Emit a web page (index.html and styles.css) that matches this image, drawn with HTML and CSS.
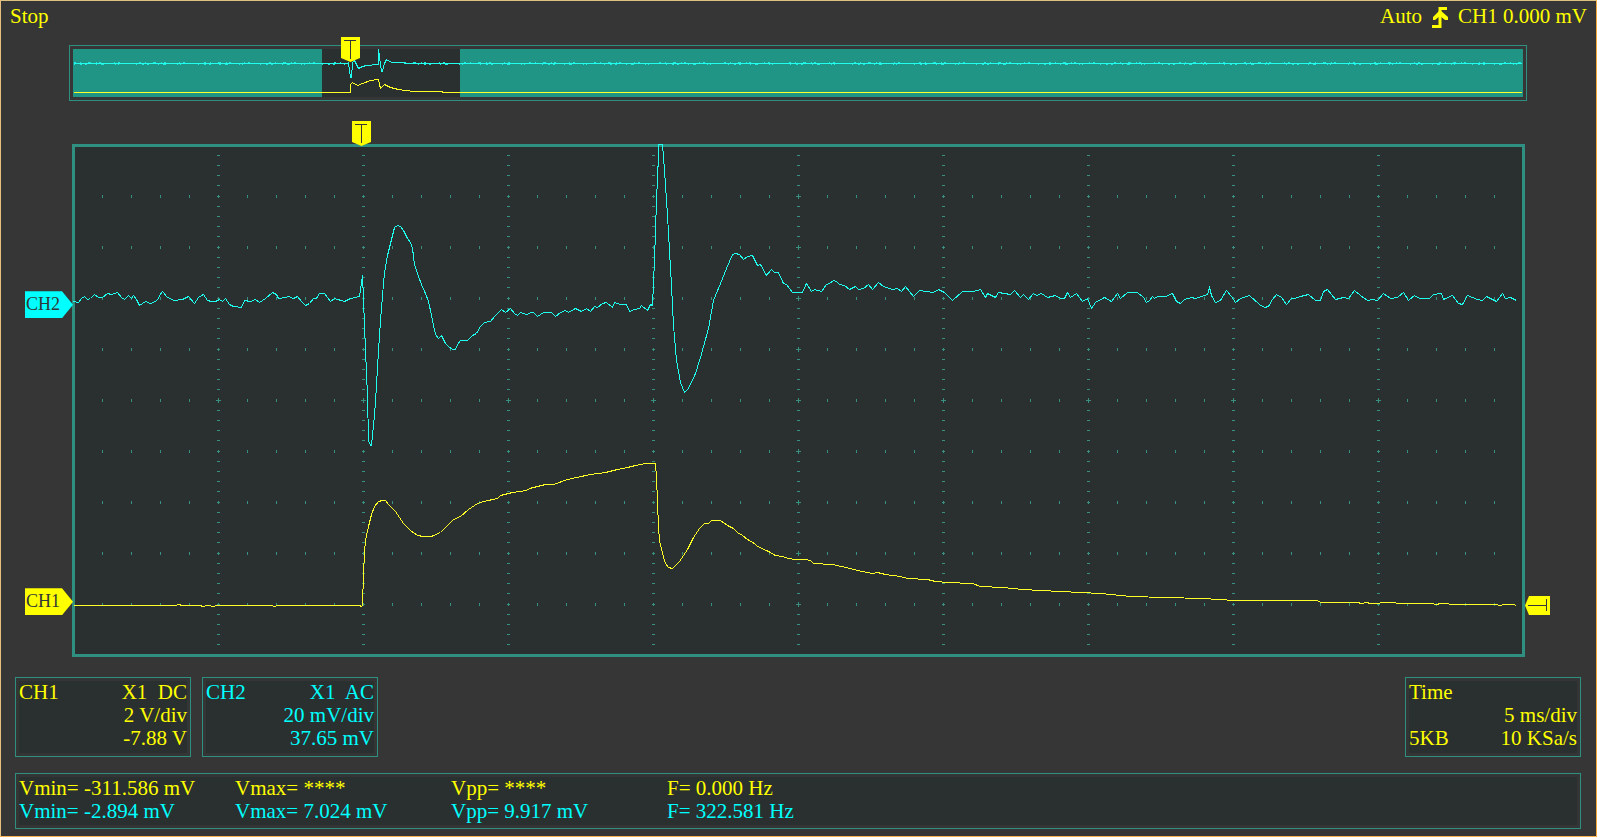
FILE: index.html
```html
<!DOCTYPE html>
<html lang="en">
<head>
<meta charset="utf-8">
<title>Oscilloscope</title>
<link rel="stylesheet" href="styles.css">
</head>
<body>
<main class="scope">
  <header class="status">
    <span>Stop</span>
    <div class="trigger">
      <span>Auto</span>
      <svg class="edge-icon" viewBox="0 0 18 21" aria-label="Rising edge"><path d="M1 19.500H9V1.500H16" fill="none" stroke="currentColor" stroke-width="3"/><path d="M9 3L2 10V13H4L9 9L14 13H17V10Z" fill="currentColor"/></svg>
      <span>CH1 0.000 mV</span>
    </div>
  </header>

  <section class="overview" aria-label="Record overview">
    <svg class="overview-graph" viewBox="73 49 1450 48" preserveAspectRatio="none">
      <rect class="record" x="73" y="49" width="1450" height="48"/>
      <rect class="window" x="322" y="49" width="138" height="48"/>
      <g class="traces" transform="translate(.5 .5)">
        <path class="noise noise-high" d="M73 62H348M398 62H1521"/>
        <path class="noise noise-low" d="M73 64H348M417 64H1521"/>
        <path class="ch2-trace" d="M73 63H348L350 77L351 77L352 62L354 60L358 68L362 66L366 65L378 64V49L381 71L382 71L384 63L386 59L391 62H401L407 63H1521"/>
        <path class="ch1-trace" d="M73 92H350V84L352 82L357 85L362 83L370 80L378 79L379 84L380 88L384 84L390 87L398 89L413 91H441L443 92H1521"/>
      </g>
    </svg>
    <svg class="marker overview-marker" viewBox="0 0 19 25"><path d="M0 0H19V21L9.500 25L0 21Z" fill="#ff0"/><path d="M3 3.500H15M9.500 3V22" stroke="#363636" fill="none"/></svg>
  </section>

  <section class="display" aria-label="Waveform display">
    <svg class="display-graph" viewBox="72 144 1453 513" preserveAspectRatio="none">
      <defs>
        <pattern id="graticule" patternUnits="userSpaceOnUse" x="198" y="176" width="145" height="51">
          <path d="M19 9.500H22M19 20.500H22M19 30.500H22M19 40.500H22M19 50.500H22M20.500 19V22M49.500 19V22M78.500 19V22M107.500 19V22M136.500 19V22"/>
        </pattern>
      </defs>
      <rect class="screen" x="73.500" y="145.500" width="1450" height="510"/>
      <rect fill="url(#graticule)" x="80" y="150" width="1438" height="502"/>
      <path class="crosses" d="M216 400.500H221M218.500 398V403M361 400.500H366M363.500 398V403M506 400.500H511M508.500 398V403M651 400.500H656M653.500 398V403M941 400.500H946M943.500 398V403M1086 400.500H1091M1088.500 398V403M1231 400.500H1236M1233.500 398V403M1376 400.500H1381M1378.500 398V403M796 196.500H801M798.500 194V199M796 247.500H801M798.500 245V250M796 298.500H801M798.500 296V301M796 349.500H801M798.500 347V352M796 400.500H801M798.500 398V403M796 451.500H801M798.500 449V454M796 502.500H801M798.500 500V505M796 553.500H801M798.500 551V556M796 604.500H801M798.500 602V607"/>
      <g class="traces" transform="translate(.5 .5)">
        <polyline class="ch2-trace" points="73,301 78,302 81,298 84,296 87,299 90,298 94,294 98,297 102,297 107,293 111,294 117,292 121,297 124,299 128,295 131,298 133,295 136,299 139,305 145,301 150,303 157,300 159,295 162,291 167,297 174,300 182,299 188,296 194,303 198,297 203,294 207,300 211,301 215,301 219,299 222,301 225,298 229,304 233,306 241,307 244,300 250,301 255,299 259,302 265,298 272,292 276,294 278,298 285,297 288,296 293,298 297,296 301,301 305,305 309,303 313,298 316,298 319,293 324,293 330,301 334,298 344,301 350,298 359,296 361,282 362,275 363,300 365,350 367,395 368,440 370,445 371,445 374,415 376,385 378,350 380,320 382,295 384,272 387,255 391,239 394,227 397,225 400,226 403,230 407,238 410,242 412,248 414,264 417,273 421,284 425,293 428,301 431,315 433,325 435,334 438,338 441,335 445,343 448,346 452,349 455,349 457,344 460,340 467,340 472,335 476,333 480,326 484,322 490,321 495,315 501,309 505,312 510,308 514,313 517,315 520,312 526,314 531,312 533,312 537,316 543,312 551,312 555,316 560,312 565,310 568,312 575,308 581,311 586,308 590,311 594,306 597,307 602,303 606,302 612,307 614,302 620,304 626,304 629,311 634,309 639,308 641,305 647,310 650,304 652,305 654,260 656,200 658,155 658,144 662,144 664,170 667,215 669,250 671,285 673,325 676,360 680,382 684,392 688,388 695,373 700,357 708,328 713,300 720,283 726,268 732,254 735,253 739,254 743,259 747,256 752,255 757,265 760,264 766,275 771,269 774,272 778,272 783,283 786,284 792,292 802,292 806,283 811,291 814,289 821,291 826,284 829,283 833,280 836,281 839,284 844,285 849,289 855,286 858,289 863,288 868,284 872,289 878,282 883,286 892,289 897,288 901,291 905,286 913,296 919,290 933,292 938,289 944,292 952,300 962,291 973,291 980,289 985,297 987,293 995,297 998,292 1010,294 1014,290 1020,297 1023,294 1028,299 1033,293 1036,295 1041,293 1047,297 1055,295 1060,298 1064,298 1067,292 1070,297 1076,293 1082,301 1087,298 1091,308 1095,302 1104,297 1111,301 1117,293 1120,298 1127,292 1137,292 1143,297 1146,302 1149,300 1152,296 1154,298 1157,296 1165,296 1172,293 1176,301 1180,303 1184,299 1191,297 1195,298 1207,294 1209,287 1211,295 1215,302 1220,300 1226,290 1231,296 1235,302 1240,298 1249,295 1259,304 1264,307 1268,306 1272,299 1276,294 1281,297 1286,304 1291,298 1294,298 1300,296 1308,294 1315,300 1320,300 1323,291 1327,289 1335,299 1343,297 1348,298 1354,290 1360,295 1367,300 1372,299 1377,300 1383,293 1390,298 1397,297 1403,292 1408,300 1414,295 1419,298 1429,298 1433,294 1441,293 1443,299 1452,295 1458,303 1462,304 1467,295 1477,299 1482,300 1486,296 1496,301 1502,293 1505,298 1510,297 1516,300"/>
        <polyline class="ch1-trace" points="73,605 175,605 178,604 182,605 200,605 202,606 208,605 213,606 216,605 271,605 274,606 277,605 359,605 361,606 362,605 363,573 364,552 365,540 368,526 371,514 374,506 378,501 382,500 385,500 388,504 395,511 403,523 410,530 417,535 423,536 431,536 440,532 448,524 453,519 460,516 468,509 477,503 483,501 497,498 500,495 512,492 526,490 529,488 537,486 545,484 553,484 567,479 590,474 605,472 617,469 627,467 635,465 645,463 655,463 656,477 657,502 658,527 659,540 662,553 665,563 668,567 672,568 679,561 687,549 693,537 699,528 704,523 708,523 711,520 720,520 727,525 733,528 737,532 742,535 747,539 754,543 757,546 768,551 775,555 782,556 788,558 795,559 805,559 810,560 813,563 832,564 850,568 857,570 872,573 877,572 885,574 900,576 907,578 927,579 935,581 947,582 972,583 980,586 1002,587 1023,589 1040,590 1080,592 1100,593 1130,596 1165,597 1202,598 1235,600 1265,600 1300,600 1316,600 1321,602 1357,602 1361,603 1366,602 1370,603 1390,602 1400,603 1430,603 1436,604 1440,603 1447,603 1450,604 1496,604 1499,605 1504,604 1513,604 1516,605"/>
      </g>
    </svg>
    <svg class="marker trigger-time" viewBox="0 0 19 25"><path d="M0 0H19V21L9.500 25L0 21Z" fill="#ff0"/><path d="M3 3.500H15M9.500 3V22" stroke="#363636" fill="none"/></svg>
    <span class="tag tag-ch2">CH2</span>
    <span class="tag tag-ch1">CH1</span>
    <svg class="trigger-level" viewBox="0 0 25 19"><path d="M25 0H4L0 9.500L4 19H25Z" fill="#ff0"/><path d="M21.500 3V15M22 9.500H3" stroke="#363636" fill="none"/></svg>
  </section>

  <section class="settings">
    <div class="panel ch1">
      <div class="line"><span>CH1</span><span>X1&nbsp; DC</span></div>
      <div class="line end">2 V/div</div>
      <div class="line end">-7.88 V</div>
    </div>
    <div class="panel ch2">
      <div class="line"><span>CH2</span><span>X1&nbsp; AC</span></div>
      <div class="line end">20 mV/div</div>
      <div class="line end">37.65 mV</div>
    </div>
    <div class="panel time">
      <div class="line">Time</div>
      <div class="line end">5 ms/div</div>
      <div class="line"><span>5KB</span><span>10 KSa/s</span></div>
    </div>
  </section>

  <section class="measures" aria-label="Measurements">
    <table class="readings">
      <tr class="ch1"><td>Vmin= -311.586 mV</td><td>Vmax= ****</td><td>Vpp= ****</td><td>F= 0.000 Hz</td></tr>
      <tr class="ch2"><td>Vmin= -2.894 mV</td><td>Vmax= 7.024 mV</td><td>Vpp= 9.917 mV</td><td>F= 322.581 Hz</td></tr>
    </table>
  </section>
</main>
</body>
</html>
```
FILE: styles.css
```css
:root {
  --case: #363636;
  --screen: #2a2f2f;
  --line: #2f8f80;
  --ch1: #ffff00;
  --ch2: #00ffff;
}

* { box-sizing: border-box; }

body {
  margin: 0;
  background: var(--case);
  color: var(--ch1);
  font: 21px/23px "Liberation Serif", serif;
}

.scope {
  display: flex;
  flex-direction: column;
  height: 100vh;
  min-height: 640px;
  padding-bottom: 7px;
  border: 1px solid;
  border-color: #dcc080 #f5a93c #f8b254 #e6c07c;
}

.status {
  display: flex;
  justify-content: space-between;
  padding: 4px 9px 0;
}

.trigger {
  display: flex;
  gap: 9px;
}

.edge-icon {
  width: 18px;
  height: 21px;
  margin-top: 2px;
}

.overview {
  position: relative;
  height: 56px;
  margin: 17px 69px 0 68px;
  padding: 3px;
  border: 1px solid var(--line);
}

.overview-graph,
.display-graph {
  display: block;
  width: 100%;
  height: 100%;
}

.record { fill: #209585; }
.window { fill: var(--screen); }

.traces {
  fill: none;
  stroke-width: 1px;
  shape-rendering: crispEdges;
}

.ch1-trace { stroke: #ffff28; }
.ch2-trace { stroke: #20ffee; }

.noise { stroke: #20e8dc; }
.noise-high { stroke-dasharray: 2 4 1 7 3 5 1 2 2 13 1 3 2 19; }
.noise-low { stroke-dasharray: 1 5 2 3 2 9 1 4 3 11 1 2 1 17; }

.marker {
  position: absolute;
  width: 19px;
  height: 25px;
}

.overview-marker {
  top: -9px;
  left: 18.6%;
}

.display {
  position: relative;
  flex: 1;
  min-height: 0;
  margin: 43px 71px 0;
}

.screen {
  fill: var(--screen);
  stroke: var(--line);
  stroke-width: 3px;
}

.display-graph pattern path,
.crosses {
  fill: none;
  stroke: #3a9080;
}

.trigger-time {
  top: -23px;
  left: calc(20% - 11px);
}

.tag {
  position: absolute;
  left: -47px;
  width: 48px;
  height: 27px;
  padding-left: 1px;
  color: #303838;
  font-size: 18px;
  line-height: 27px;
  clip-path: polygon(0 0, 37px 0, 100% 50%, 37px 100%, 0 100%);
}

.tag-ch2 {
  top: 28.7%;
  background: var(--ch2);
}

.tag-ch1 {
  top: 86.6%;
  background: var(--ch1);
}

.trigger-level {
  position: absolute;
  top: 88.1%;
  left: 100%;
  width: 25px;
  height: 19px;
}

.settings {
  display: flex;
  gap: 11px;
  margin: 20px 15px 0 14px;
}

.panel,
.measures {
  padding: 3px 3px 6px;
  border: 1px solid var(--line);
  background: var(--screen);
  box-shadow: inset 0 0 0 3px #343636;
}

.panel { width: 176px; }
.time { margin-left: auto; }

.line {
  display: flex;
  justify-content: space-between;
}

.end { justify-content: flex-end; }

.ch1 { color: var(--ch1); }
.ch2 { color: var(--ch2); }

.measures {
  margin: 16px 15px 0 14px;
  padding-bottom: 5px;
}

.readings {
  border-collapse: collapse;
  table-layout: fixed;
  width: 864px;
  max-width: 100%;
}

.readings td { padding: 0; }
```
